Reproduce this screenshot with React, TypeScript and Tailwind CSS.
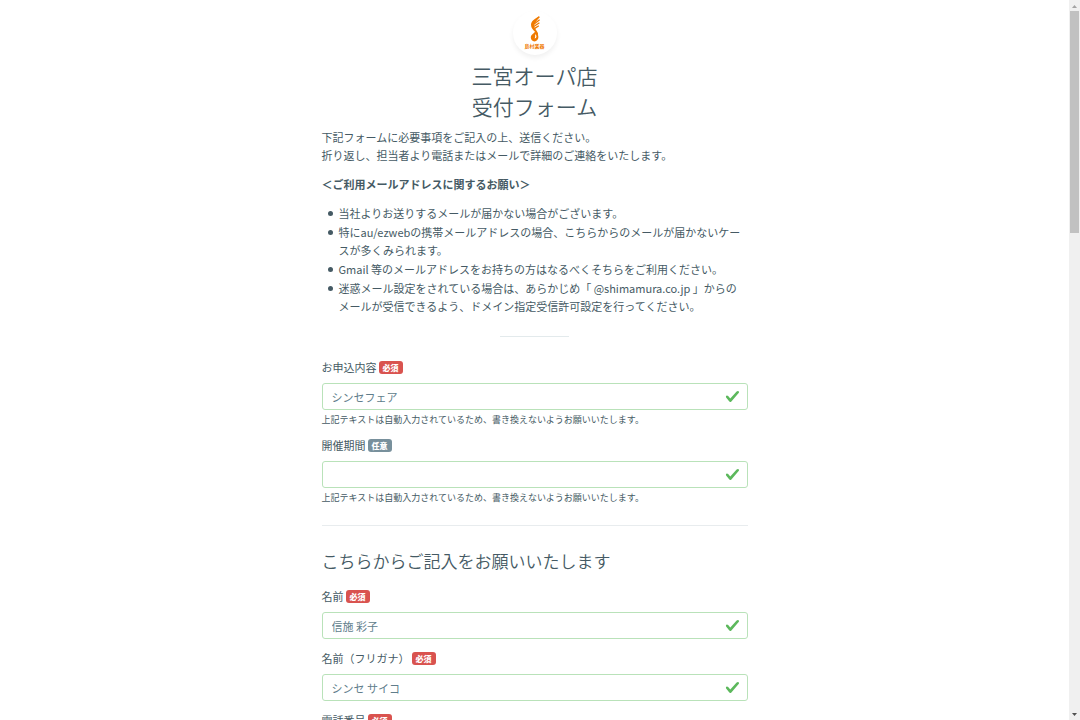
import { ReactNode } from 'react'

interface FieldItem {
  id: string
  label: string
  value: string
  required: boolean
  help?: string
}

const autoHelp = '上記テキストは自動入力されているため、書き換えないようお願いいたします。'

const presetFields: FieldItem[] = [
  { id: 'subject', label: 'お申込内容', value: 'シンセフェア', required: true, help: autoHelp },
  { id: 'period', label: '開催期間', value: '', required: false, help: autoHelp },
]

const customerFields: FieldItem[] = [
  { id: 'name', label: '名前', value: '信施 彩子', required: true },
  { id: 'kana', label: '名前（フリガナ）', value: 'シンセ サイコ', required: true },
  { id: 'tel', label: '電話番号', value: '', required: true },
]

const notes = [
  '当社よりお送りするメールが届かない場合がございます。',
  '特にau/ezwebの携帯メールアドレスの場合、こちらからのメールが届かないケースが多くみられます。',
  'Gmail 等のメールアドレスをお持ちの方はなるべくそちらをご利用ください。',
  '迷惑メール設定をされている場合は、あらかじめ「 @shimamura.co.jp 」からのメールが受信できるよう、ドメイン指定受信許可設定を行ってください。',
]

function Logo() {
  return (
    <div className="mx-auto flex size-11 flex-col items-center rounded-full bg-white pt-[5px] text-[#ef7a00] shadow-[0_3px_5px_rgba(0,0,0,0.06)]">
      <svg className="h-[26px] w-[10px] shrink-0" viewBox="0 0 10 26" fill="none" stroke="currentColor" aria-hidden="true">
        <path
          d="M9.400 0C5 2.600 1 5 1 8.800c0 3.400 2 5 4.400 7.200L8 19.400c.4-2-.4-3.400-1.600-5C5 12.600 4 11.200 4 9z"
          fill="currentColor"
          stroke="none"
        />
        <path d="M3.200 6.800L9.400 .8M3.200 8.800L9.600 3.800M3.400 10.800L9.400 6.800M4.400 12.600L8.800 9.800" strokeWidth="1.300" />
        <path
          d="M5 14.600c.2 1.600-.6 2.200-2 3.200C1.400 19 .8 20.200.8 21.600c0 2.200 1.600 3.800 3.600 3.800 2.400 0 4-2 4-4.400 0-2.400-1.400-4.400-3.400-6.400zM5 18.200c1.200.6 1.600 1.600 1.400 2.600-.2 1-.8 1.600-1.800 1.800.6-1.400.8-2.800.4-4.400z"
          fill="currentColor"
          fillRule="evenodd"
          stroke="none"
        />
      </svg>
      <span className="mt-px text-[5px] leading-[6px] font-bold whitespace-nowrap">島村楽器</span>
    </div>
  )
}

function Badge({ required }: { required: boolean }) {
  return (
    <span
      className={`mt-px ml-[2px] rounded-[3px] px-[4px] text-[8px] leading-[13px] font-black text-white ${
        required ? 'bg-[#d9534f]' : 'bg-[#78909c]'
      }`}
    >
      {required ? '必須' : '任意'}
    </span>
  )
}

function Field({ item }: { item: FieldItem }) {
  return (
    <div className="mb-[10px]">
      <label htmlFor={item.id} className="mb-[7px] flex items-center leading-[18px]">
        {item.label}
        <Badge required={item.required} />
      </label>
      <div className="relative">
        <input
          id={item.id}
          type="text"
          defaultValue={item.value}
          className="block h-[27px] w-full rounded-[3px] border border-[#b9e2b9] bg-white px-[9px] text-[11px] text-[#607d8b] outline-none"
        />
        <svg className="absolute top-[6px] right-[8px] size-[15px]" viewBox="0 0 8 8" aria-hidden="true">
          <path
            fill="#5cb85c"
            d="M2.300 6.730L.6 4.530c-.4-1.040.46-1.400 1.100-.8l1.100 1.400 3.400-3.800c.6-.63 1.600-.27 1.200.7l-4 4.600c-.43.5-.8.4-1.100.1z"
          />
        </svg>
      </div>
      {item.help && <small className="mt-[3px] block text-[9px] leading-[13px]">{item.help}</small>}
    </div>
  )
}

function Paragraph({ children }: { children: ReactNode }) {
  return <p className="mb-[11px] leading-[18px]">{children}</p>
}

function ScrollRail() {
  return (
    <div className="flex w-[11px] shrink-0 flex-col items-center bg-[#f0f0f0]" aria-hidden="true">
      <svg className="h-[11px] w-[11px] shrink-0" viewBox="0 0 11 11">
        <path d="M5.500 5L8 8H3z" fill="#a3a3a3" />
      </svg>
      <div className="h-[222px] w-[9px] shrink-0 bg-[#c1c1c1]" />
      <svg className="mt-auto h-[11px] w-[11px] shrink-0" viewBox="0 0 11 11">
        <path d="M5.500 7L8 4H3z" fill="#505050" />
      </svg>
    </div>
  )
}

export default function App() {
  return (
    <div className="flex h-screen overflow-hidden bg-white font-['Noto_Sans_CJK_JP','Noto_Sans',sans-serif] text-[11px] text-[#455a64]" lang="ja">
      <main className="min-w-0 flex-1 overflow-hidden">
        <div className="mx-auto w-full max-w-[426px] pt-[11px]">
          <Logo />
          <h1 className="mt-[5px] mb-[6px] text-center text-[21px] leading-[31px] font-[350]">
            三宮オーパ店
            <br />
            受付フォーム
          </h1>
          <Paragraph>
            下記フォームに必要事項をご記入の上、送信ください。
            <br />
            折り返し、担当者より電話またはメールで詳細のご連絡をいたします。
          </Paragraph>
          <Paragraph>
            <strong className="font-bold">＜ご利用メールアドレスに関するお願い＞</strong>
          </Paragraph>
          <ul className="mb-[21px] flex flex-col gap-px pr-[3px] pl-[6px] leading-[18px]">
            {notes.map((note) => (
              <li key={note} className="flex gap-[6px]">
                <span className="mt-[7px] size-[5px] shrink-0 rounded-full bg-[#455a64]" />
                <span>{note}</span>
              </li>
            ))}
          </ul>
          <hr className="mx-auto mb-[21px] w-[69px] border-[#e3eaec]" />
          <form>
            {presetFields.map((item) => (
              <Field key={item.id} item={item} />
            ))}
            <hr className="mt-[21px] mb-[22px] border-[#e8ecee]" />
            <h2 className="mb-[13px] text-[17px] leading-[26px] font-[350]">こちらからご記入をお願いいたします</h2>
            {customerFields.map((item) => (
              <Field key={item.id} item={item} />
            ))}
          </form>
        </div>
      </main>
      <ScrollRail />
    </div>
  )
}
